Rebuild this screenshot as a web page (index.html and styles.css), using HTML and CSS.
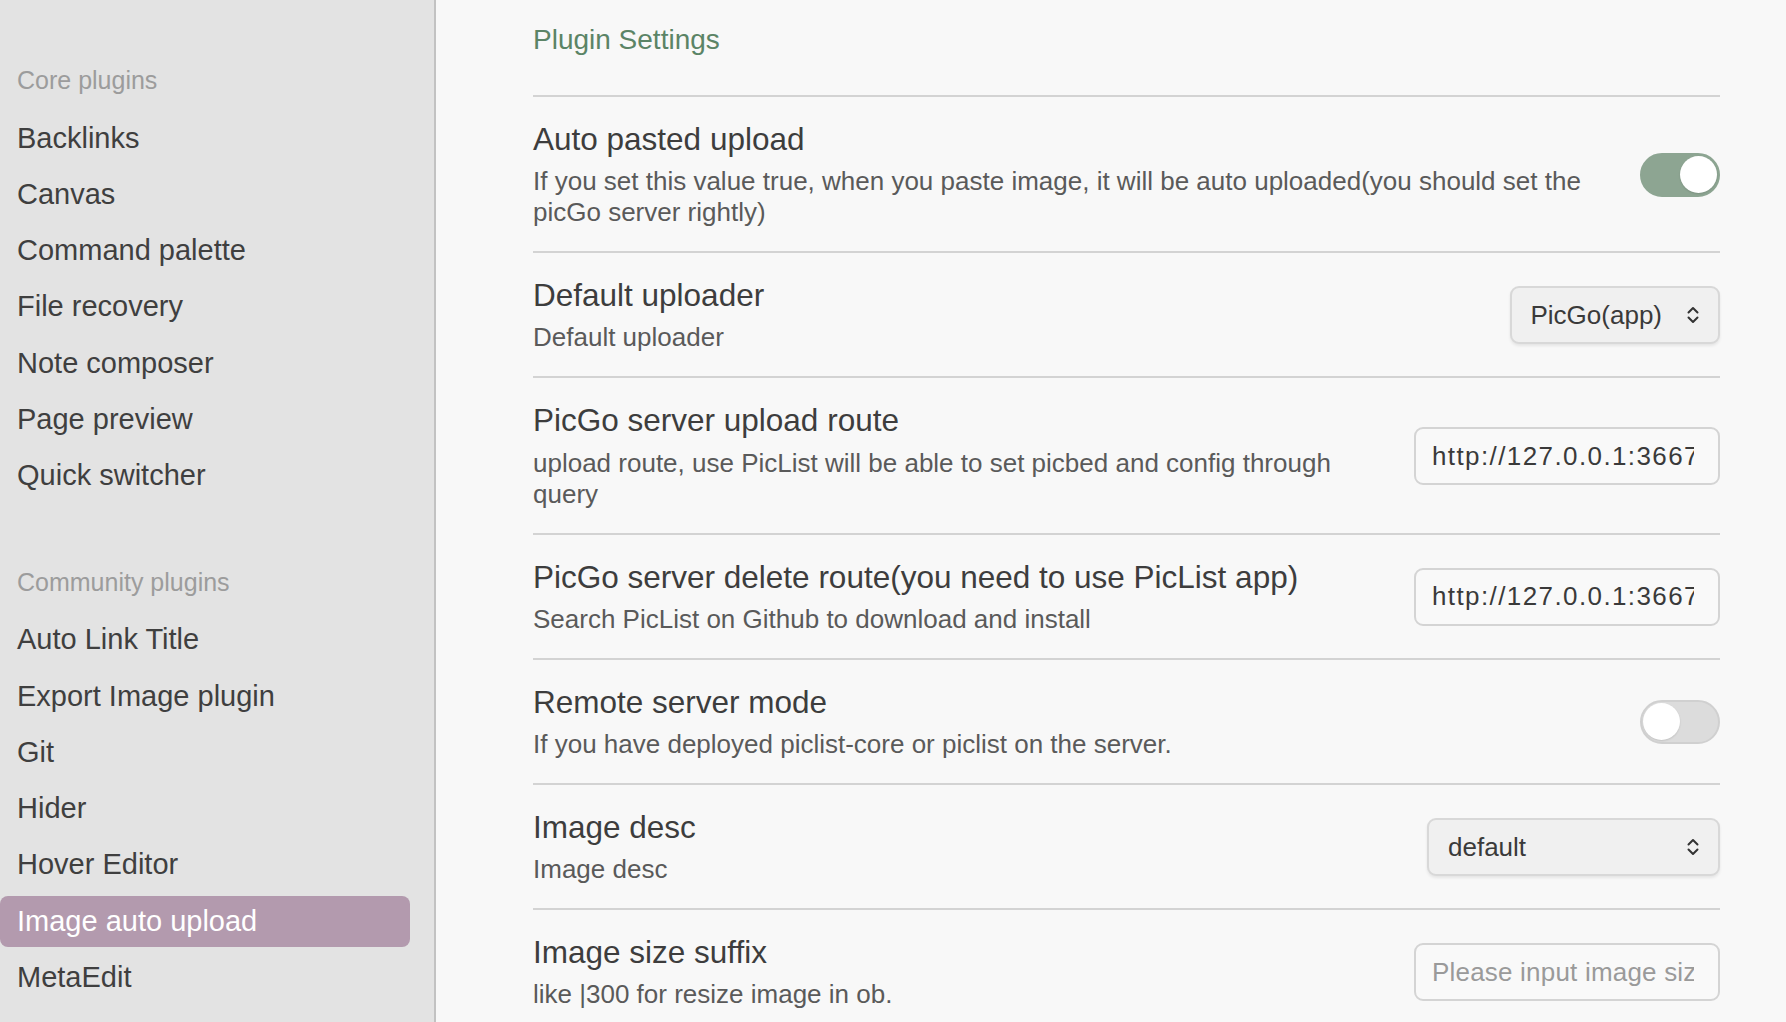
FILE: index.html
```html
<!DOCTYPE html>
<html lang="en">
<head>
<meta charset="utf-8">
<title>Plugin Settings</title>
<link rel="stylesheet" href="styles.css">
</head>
<body>
<div class="app">
  <nav class="sidebar">
    <div class="nav-group">
      <div class="nav-header">Core plugins</div>
      <div class="nav-list">
        <div class="nav-item">Backlinks</div>
        <div class="nav-item">Canvas</div>
        <div class="nav-item">Command palette</div>
        <div class="nav-item">File recovery</div>
        <div class="nav-item">Note composer</div>
        <div class="nav-item">Page preview</div>
        <div class="nav-item">Quick switcher</div>
      </div>
    </div>
    <div class="nav-group nav-group--community">
      <div class="nav-header">Community plugins</div>
      <div class="nav-list">
        <div class="nav-item">Auto Link Title</div>
        <div class="nav-item">Export Image plugin</div>
        <div class="nav-item">Git</div>
        <div class="nav-item">Hider</div>
        <div class="nav-item">Hover Editor</div>
        <div class="nav-item is-active">Image auto upload</div>
        <div class="nav-item">MetaEdit</div>
      </div>
    </div>
  </nav>

  <main class="content">
    <h2 class="page-title">Plugin Settings</h2>

    <div class="setting">
      <div class="setting-info">
        <div class="setting-name">Auto pasted upload</div>
        <div class="setting-desc">If you set this value true, when you paste image, it will be auto uploaded(you should set the picGo server rightly)</div>
      </div>
      <div class="setting-control">
        <div class="toggle is-on"><span class="knob"></span></div>
      </div>
    </div>

    <div class="setting">
      <div class="setting-info">
        <div class="setting-name">Default uploader</div>
        <div class="setting-desc">Default uploader</div>
      </div>
      <div class="setting-control">
        <div class="dropdown">
          <span class="dropdown-value">PicGo(app)</span>
          <svg class="chevrons" width="14" height="18" viewBox="0 0 14 18" aria-hidden="true"><path d="M2.5 6.5 L7 2 L11.5 6.5 M2.5 11.5 L7 16 L11.5 11.5" fill="none" stroke="#333" stroke-width="2" stroke-linecap="round" stroke-linejoin="round"/></svg>
        </div>
      </div>
    </div>

    <div class="setting">
      <div class="setting-info">
        <div class="setting-name">PicGo server upload route</div>
        <div class="setting-desc">upload route, use PicList will be able to set picbed and config through query</div>
      </div>
      <div class="setting-control">
        <input class="text-input" type="text" value="http://127.0.0.1:36677/upload" readonly>
      </div>
    </div>

    <div class="setting">
      <div class="setting-info">
        <div class="setting-name">PicGo server delete route(you need to use PicList app)</div>
        <div class="setting-desc">Search PicList on Github to download and install</div>
      </div>
      <div class="setting-control">
        <input class="text-input" type="text" value="http://127.0.0.1:36677/delete" readonly>
      </div>
    </div>

    <div class="setting">
      <div class="setting-info">
        <div class="setting-name">Remote server mode</div>
        <div class="setting-desc">If you have deployed piclist-core or piclist on the server.</div>
      </div>
      <div class="setting-control">
        <div class="toggle"><span class="knob"></span></div>
      </div>
    </div>

    <div class="setting">
      <div class="setting-info">
        <div class="setting-name">Image desc</div>
        <div class="setting-desc">Image desc</div>
      </div>
      <div class="setting-control">
        <div class="dropdown dropdown--wide">
          <span class="dropdown-value">default</span>
          <svg class="chevrons" width="14" height="18" viewBox="0 0 14 18" aria-hidden="true"><path d="M2.5 6.5 L7 2 L11.5 6.5 M2.5 11.5 L7 16 L11.5 11.5" fill="none" stroke="#333" stroke-width="2" stroke-linecap="round" stroke-linejoin="round"/></svg>
        </div>
      </div>
    </div>

    <div class="setting">
      <div class="setting-info">
        <div class="setting-name">Image size suffix</div>
        <div class="setting-desc">like |300 for resize image in ob.</div>
      </div>
      <div class="setting-control">
        <input class="text-input" type="text" placeholder="Please input image size suffix" readonly>
      </div>
    </div>
  </main>
</div>
</body>
</html>
```

FILE: styles.css
```css
* {
  box-sizing: border-box;
}

html, body {
  margin: 0;
  padding: 0;
  height: 1022px;
  overflow: hidden;
}

body {
  font-family: "Liberation Sans", Arial, sans-serif;
  color: #404040;
  background: #f8f8f8;
}

.app {
  display: flex;
  height: 1022px;
}

/* ---------- Sidebar ---------- */
.sidebar {
  width: 436px;
  flex: none;
  background: #e3e3e3;
  border-right: 2px solid #c2c2c2;
  padding: 65px 24px 0 0;
}

.nav-header {
  font-size: 25px;
  line-height: 30px;
  color: #9c9c9c;
  padding-left: 17px;
  margin-bottom: 18px;
}

.nav-list {
  display: flex;
  flex-direction: column;
  gap: 5.3px;
}

.nav-group--community {
  margin-top: 65px;
}

.nav-item {
  font-size: 29px;
  line-height: 33px;
  height: 51px;
  padding: 8.5px 17px 9.5px;
  color: #3f3f3f;
  border-radius: 8px;
  white-space: nowrap;
}

.nav-item.is-active {
  background: #b39aae;
  color: #ffffff;
}

/* ---------- Content ---------- */
.content {
  flex: 1;
  padding: 23.4px 66px 0 97px;
  min-width: 0;
}

.page-title {
  margin: 0 0 37.6px;
  font-size: 28px;
  line-height: 34px;
  font-weight: normal;
  color: #5b8466;
}

.setting {
  display: flex;
  align-items: center;
  border-top: 2px solid #d3d3d3;
  padding: 24.1px 0 23px;
}

.setting-info {
  flex: 1 1 auto;
  min-width: 0;
  padding-right: 40px;
}

.setting-name {
  font-size: 31.5px;
  line-height: 36px;
  color: #3d3d3d;
  white-space: nowrap;
}

.setting-desc {
  margin-top: 9.1px;
  font-size: 26px;
  line-height: 31px;
  color: #5a5a5a;
}

.setting-control {
  flex: none;
  display: flex;
  align-items: center;
}

/* Toggle */
.toggle {
  width: 80px;
  height: 44px;
  border-radius: 22px;
  background: #dcdcdc;
  border: 2px solid #d0d0d0;
  display: flex;
  align-items: center;
  padding: 0 1px;
}

.toggle.is-on {
  background: #8da592;
  border-color: #8da592;
  justify-content: flex-end;
}

.knob {
  width: 37px;
  height: 37px;
  border-radius: 50%;
  background: #ffffff;
  box-shadow: 0 1px 2px rgba(0, 0, 0, 0.12);
}

/* Dropdown */
.dropdown {
  height: 58px;
  display: flex;
  align-items: center;
  gap: 24px;
  padding: 0 18px 0 19px;
  background: #f0f0f0;
  border: 2px solid #d8d8d8;
  border-radius: 9px;
  box-shadow: 0 2px 3px rgba(0, 0, 0, 0.08);
  font-size: 26px;
  color: #3a3a3a;
}

.dropdown--wide {
  width: 293px;
  justify-content: space-between;
}

.chevrons {
  display: block;
  flex: none;
}

/* Text input */
.text-input {
  width: 306px;
  height: 58px;
  padding: 0 24px 0 16px;
  border: 2px solid #d4d4d4;
  border-radius: 9px;
  background: #f9f9f9;
  font-family: "Liberation Sans", Arial, sans-serif;
  font-size: 26px;
  letter-spacing: 1.4px;
  color: #3a3a3a;
  outline: none;
}

.text-input::placeholder {
  color: #9a9a9a;
  letter-spacing: 0.2px;
}
```
